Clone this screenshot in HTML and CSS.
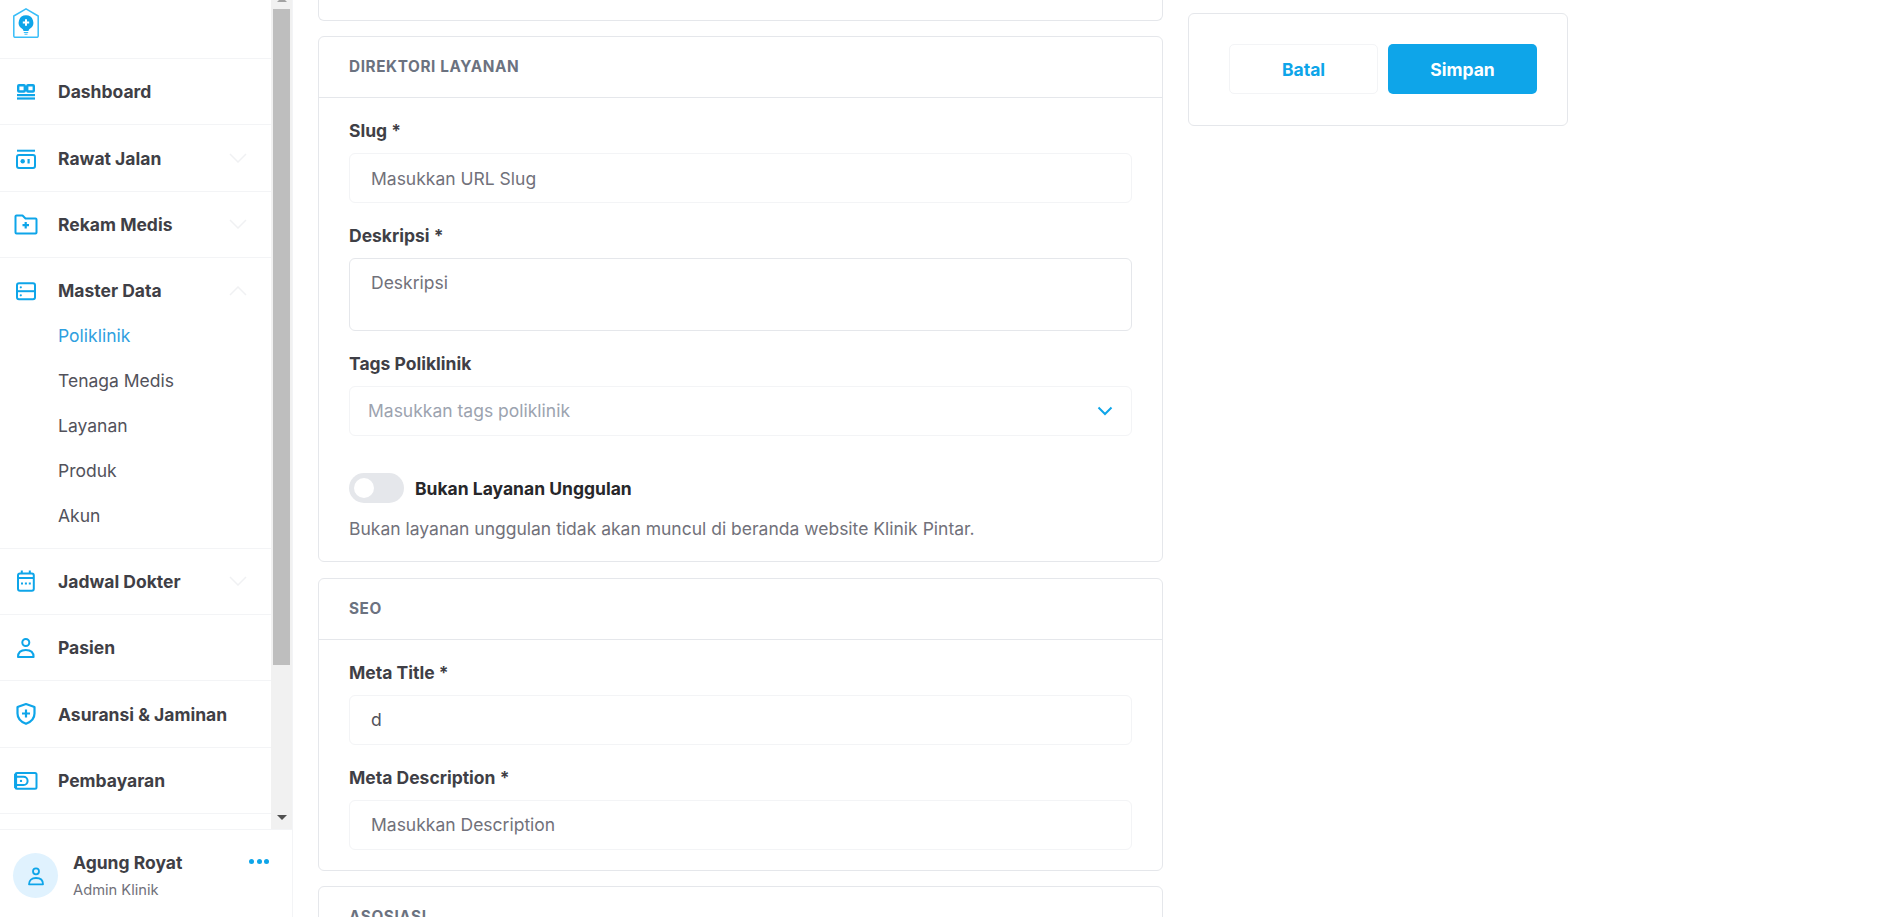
FILE: index.html
```html
<!DOCTYPE html>
<html lang="id">
<head>
<meta charset="utf-8">
<title>Poliklinik</title>
<link rel="stylesheet" href="styles.css">
</head>
<body>
<div class="app">
  <aside class="sidebar">
    <div class="side-top">
      <nav class="nav">
        <div class="logo-row">
          <svg class="logo" viewBox="0 0 26 30" width="26" height="30" fill="none">
            <path d="M13 .8 25.200 8v20a1.300 1.300 0 0 1-1.300 1.300H2.100A1.300 1.300 0 0 1 .8 28V8z" stroke="#38bdf8" stroke-width="1.500" stroke-linejoin="round"/>
            <path d="M13 7.300a7.300 7.300 0 0 1 4.200 13.300c-1 .7-1.500 1.400-1.700 2.400h-5c-.2-1-.7-1.700-1.700-2.400A7.300 7.300 0 0 1 13 7.300z" fill="#0ea5e9"/>
            <path d="M13 11.300v6.400M9.800 14.500h6.400" stroke="#fff" stroke-width="2"/>
            <path d="M10.800 24.500h4.400M11.500 26.200h3" stroke="#38bdf8" stroke-width="1"/>
          </svg>
        </div>
        <a class="item">
          <svg class="ico" viewBox="0 0 24 24" fill="none"><rect x="4.200" y="5.200" width="6.600" height="6.300" rx=".8" stroke="#0ea5e9" stroke-width="2.400"/><rect x="13.200" y="5.200" width="6.600" height="6.300" rx=".8" stroke="#0ea5e9" stroke-width="2.400"/><rect x="3" y="14" width="18" height="2.200" fill="#0ea5e9"/><rect x="3" y="17.400" width="18" height="2.200" fill="#0ea5e9"/></svg>
          <span class="item-label">Dashboard</span>
        </a>
        <a class="item">
          <svg class="ico" viewBox="0 0 24 24" fill="none"><path d="M3 4.700h18" stroke="#0ea5e9" stroke-width="2"/><rect x="3" y="9" width="18" height="13" rx="2" stroke="#0ea5e9" stroke-width="2"/><circle cx="8.700" cy="15.200" r="2.200" fill="#0ea5e9"/><rect x="13.500" y="13" width="2.200" height="4.500" fill="#0ea5e9"/></svg>
          <span class="item-label">Rawat Jalan</span>
          <svg class="chev" viewBox="0 0 18 10" fill="none"><path d="M1 1l8 8 8-8" stroke="#f0f1f3" stroke-width="1.500"/></svg>
        </a>
        <a class="item">
          <svg class="ico" viewBox="0 0 24 24" fill="none"><path d="M1.500 4.500a1 1 0 0 1 1-1h6l3 3h10a1 1 0 0 1 1 1v13a1 1 0 0 1-1 1h-19a1 1 0 0 1-1-1z" stroke="#0ea5e9" stroke-width="2" stroke-linejoin="round"/><path d="M11.700 10v6.500M8.500 13.200H15" stroke="#0ea5e9" stroke-width="2.200"/></svg>
          <span class="item-label">Rekam Medis</span>
          <svg class="chev" viewBox="0 0 18 10" fill="none"><path d="M1 1l8 8 8-8" stroke="#f0f1f3" stroke-width="1.500"/></svg>
        </a>
        <div class="group">
          <a class="group-head">
            <svg class="ico" viewBox="0 0 24 24" fill="none"><rect x="3" y="4.200" width="18" height="16" rx="2" stroke="#0ea5e9" stroke-width="2"/><path d="M3 12.200h18" stroke="#0ea5e9" stroke-width="2"/><circle cx="6.800" cy="8.300" r="1.100" fill="#0ea5e9"/><circle cx="6.800" cy="16.300" r="1.100" fill="#0ea5e9"/></svg>
            <span class="item-label">Master Data</span>
            <svg class="chev" viewBox="0 0 18 10" fill="none"><path d="M1 9l8-8 8 8" stroke="#f0f1f3" stroke-width="1.500"/></svg>
          </a>
          <div class="sub">
            <a class="sub-item is-active">Poliklinik</a>
            <a class="sub-item">Tenaga Medis</a>
            <a class="sub-item">Layanan</a>
            <a class="sub-item">Produk</a>
            <a class="sub-item">Akun</a>
          </div>
        </div>
        <a class="item">
          <svg class="ico" viewBox="0 0 24 24" fill="none"><rect x="4" y="4.500" width="15.800" height="17.300" rx="2" stroke="#0ea5e9" stroke-width="2"/><path d="M7.800 1.500v3.500M15.800 1.500v3.500" stroke="#0ea5e9" stroke-width="2"/><path d="M4 9h15.600" stroke="#0ea5e9" stroke-width="2"/><path d="M7 14.500h2M10.900 14.500h2M14.800 14.500h2" stroke="#0ea5e9" stroke-width="2.200"/></svg>
          <span class="item-label">Jadwal Dokter</span>
          <svg class="chev" viewBox="0 0 18 10" fill="none"><path d="M1 1l8 8 8-8" stroke="#f0f1f3" stroke-width="1.500"/></svg>
        </a>
        <a class="item">
          <svg class="ico" viewBox="0 0 24 24" fill="none"><circle cx="11.800" cy="6.500" r="3.500" stroke="#0ea5e9" stroke-width="2"/><path d="M4 21c0-4.500 3-7 7.800-7s7.800 2.500 7.800 7z" stroke="#0ea5e9" stroke-width="2" stroke-linejoin="round"/></svg>
          <span class="item-label">Pasien</span>
        </a>
        <a class="item">
          <svg class="ico" viewBox="0 0 24 24" fill="none"><path d="M12 2 20.500 5v6.500c0 5-3.700 8.500-8.500 10.300-4.800-1.800-8.500-5.300-8.500-10.300V5z" stroke="#0ea5e9" stroke-width="2.200" stroke-linejoin="round"/><path d="M12 7.500v8M8 11.500h8" stroke="#0ea5e9" stroke-width="2.200"/></svg>
          <span class="item-label">Asuransi &amp; Jaminan</span>
        </a>
        <a class="item">
          <svg class="ico" viewBox="0 0 24 24" fill="none"><rect x="1.500" y="4" width="21" height="15.800" rx="1.500" stroke="#0ea5e9" stroke-width="2"/><path d="M1.500 7.800h8a4.100 4.100 0 0 1 0 8.200h-8z" stroke="#0ea5e9" stroke-width="2"/><path d="M1.600 5v14" stroke="#0ea5e9" stroke-width="3"/><circle cx="7" cy="11.900" r="1.200" fill="#0ea5e9"/></svg>
          <span class="item-label">Pembayaran</span>
        </a>
      </nav>
      <div class="scrollbar">
        <span class="arrow-up"></span>
        <span class="thumb"></span>
        <span class="arrow-down"></span>
      </div>
    </div>
    <div class="user">
      <div class="avatar">
        <svg viewBox="0 0 24 24" width="24" height="24" fill="none"><circle cx="12" cy="7.300" r="3" stroke="#0ea5e9" stroke-width="1.800"/><path d="M5 20.300c0-4 2.800-6.300 7-6.300s7 2.300 7 6.300z" stroke="#0ea5e9" stroke-width="1.800" stroke-linejoin="round"/></svg>
      </div>
      <div class="user-text">
        <div class="user-name">Agung Royat</div>
        <div class="user-role">Admin Klinik</div>
      </div>
      <div class="dots"><span></span><span></span><span></span></div>
    </div>
  </aside>
  <main class="main">
    <div class="form-col">
      <section class="card card-stub"></section>
      <section class="card">
        <h2 class="card-head">Direktori Layanan</h2>
        <div class="card-body">
          <div class="field">
            <label class="label">Slug *</label>
            <input class="input" placeholder="Masukkan URL Slug">
          </div>
          <div class="field">
            <label class="label">Deskripsi *</label>
            <textarea class="input textarea" placeholder="Deskripsi"></textarea>
          </div>
          <div class="field">
            <label class="label">Tags Poliklinik</label>
            <div class="input select">
              <span class="select-text">Masukkan tags poliklinik</span>
              <svg viewBox="0 0 16 10" width="16" height="10" fill="none"><path d="M1.500 1.500 8 8l6.500-6.500" stroke="#0ea5e9" stroke-width="2"/></svg>
            </div>
          </div>
          <div class="toggle-row">
            <span class="toggle"><span class="knob"></span></span>
            <span class="toggle-label">Bukan Layanan Unggulan</span>
          </div>
          <p class="help">Bukan layanan unggulan tidak akan muncul di beranda website Klinik Pintar.</p>
        </div>
      </section>
      <section class="card">
        <h2 class="card-head">SEO</h2>
        <div class="card-body">
          <div class="field">
            <label class="label">Meta Title *</label>
            <input class="input" value="d">
          </div>
          <div class="field">
            <label class="label">Meta Description *</label>
            <input class="input" placeholder="Masukkan Description">
          </div>
        </div>
      </section>
      <section class="card">
        <h2 class="card-head">Asosiasi</h2>
      </section>
    </div>
    <div class="action-col">
      <div class="action-card">
        <button class="btn btn-ghost">Batal</button>
        <button class="btn btn-primary">Simpan</button>
      </div>
    </div>
  </main>
</div>
</body>
</html>
```
FILE: styles.css
```css
* { box-sizing: border-box; }
html, body { margin: 0; height: 100%; overflow: hidden; background: #fff; }
body { font-family: Inter, "Noto Sans", sans-serif; color: #3f3f46; }
.app { display: flex; height: 917px; overflow: hidden; }

.sidebar { width: 293px; flex: none; display: flex; flex-direction: column; border-right: 1px solid #f3f4f6; }
.side-top { display: flex; height: 829px; flex: none; overflow: hidden; }
.nav { width: 271px; flex: none; }
.logo-row { height: 59px; padding: 8px 0 0 13px; border-bottom: 1px solid #f3f4f6; }
.logo { display: block; }
.item, .group-head { display: flex; align-items: center; height: 66.4px; padding-left: 14px; }
.item { border-bottom: 1px solid #f3f4f6; }
.item .item-label { padding-top: 1px; }
.group { border-bottom: 1px solid #f3f4f6; }
.ico { width: 24px; height: 24px; flex: none; margin-right: 20px; }
.item-label { font-size: 17.500px; line-height: 26px; font-weight: 700; color: #3f3f46; flex: 1; white-space: nowrap; }
.chev { width: 18px; height: 10px; flex: none; margin-right: 24px; }
.sub { display: flex; flex-direction: column; gap: 20px; margin-top: -1.600px; padding: 0 0 19.700px 58px; }
.sub-item { font-size: 17.500px; line-height: 25px; color: #52525b; }
.is-active { color: #2f9fe0; }

.scrollbar { width: 21px; flex: none; background: #f1f1f1; display: flex; flex-direction: column; align-items: center; }
.arrow-up { width: 0; height: 0; margin-top: -3px; border: 5px solid transparent; border-top: 0; border-bottom: 5px solid #a3a3a3; }
.thumb { width: 17px; height: 656px; margin-top: 7px; background: #bebebe; }
.arrow-down { width: 0; height: 0; margin-top: auto; margin-bottom: 9px; border: 5px solid transparent; border-bottom: 0; border-top: 5px solid #505050; }

.user { flex: 1; display: flex; align-items: flex-start; border-top: 1px solid #f3f4f6; padding: 23px 0 0 13px; }
.avatar { width: 45px; height: 45px; flex: none; border-radius: 50%; background: #e0f2fe; display: flex; align-items: center; justify-content: center; }
.user-text { margin: -3px 0 0 15px; flex: none; width: 176px; }
.user-name { font-size: 17.500px; font-weight: 700; line-height: 26px; color: #3f3f46; }
.user-role { font-size: 14.700px; line-height: 20px; margin-top: 4px; color: #71717a; }
.dots { display: flex; gap: 2.500px; margin: 6px 0 0 0; }
.dots span { width: 5px; height: 5px; border-radius: 50%; background: #0ea5e9; }

.main { flex: 1; display: flex; align-items: flex-start; gap: 25px; padding-left: 25px; min-width: 0; }
.form-col { width: 845px; flex: none; display: flex; flex-direction: column; gap: 15.400px; }
.card { flex: none; border: 1px solid #e5e7eb; border-radius: 6px; background: #fff; }
.card-stub { height: 21px; border-top: 0; border-radius: 0 0 6px 6px; }
.card-head { margin: 0; height: 61px; display: flex; align-items: center; padding: 0 0 1px 30px; border-bottom: 1px solid #e5e7eb; font-size: 15.300px; font-weight: 700; letter-spacing: .6px; text-transform: uppercase; color: #6b7280; }
.card-body { padding: 20px 30px 20px; display: flex; flex-direction: column; gap: 20px; }
.field { display: flex; flex-direction: column; gap: 10px; }
.label { padding-top: 1px; height: 25px; font-size: 17.500px; font-weight: 700; line-height: 24px; color: #3f3f46; }
.input { display: block; width: 100%; height: 50px; border: 1px solid #f3f4f6; border-radius: 6px; padding: 0 21px; font: 400 17.500px Inter, sans-serif; color: #52525b; background: #fff; outline: 0; }
.input::placeholder { color: #71717a; opacity: 1; }
.textarea { height: 73px; padding-top: 13px; border-color: #e5e7eb; resize: none; }
.select { display: flex; align-items: center; justify-content: space-between; padding: 0 18px 1px; }
.select-text { color: #9ca3af; }
.toggle-row { display: flex; align-items: center; gap: 11px; margin-top: 17px; }
.toggle { width: 55px; height: 30px; border-radius: 15px; background: #e5e7eb; padding: 5px; flex: none; }
.knob { display: block; width: 20px; height: 20px; border-radius: 50%; background: #fff; }
.toggle-label { font-size: 17.500px; font-weight: 700; color: #27272a; }
.help { margin: -6px 0 0; font-size: 17.500px; line-height: 24px; color: #71717a; }

.action-col { width: 380px; flex: none; padding-top: 13px; }
.action-card { display: flex; justify-content: flex-end; gap: 10px; height: 113px; padding: 30px 30px 0 0; border: 1px solid #e5e7eb; border-radius: 6px; }
.btn { width: 149px; height: 50px; border-radius: 5px; font: 700 17.500px Inter, sans-serif; cursor: pointer; }
.btn-ghost { background: #fff; border: 1px solid #f3f4f6; color: #0ea5e9; }
.btn-primary { background: #0ea5e9; border: 0; color: #fff; }
```
